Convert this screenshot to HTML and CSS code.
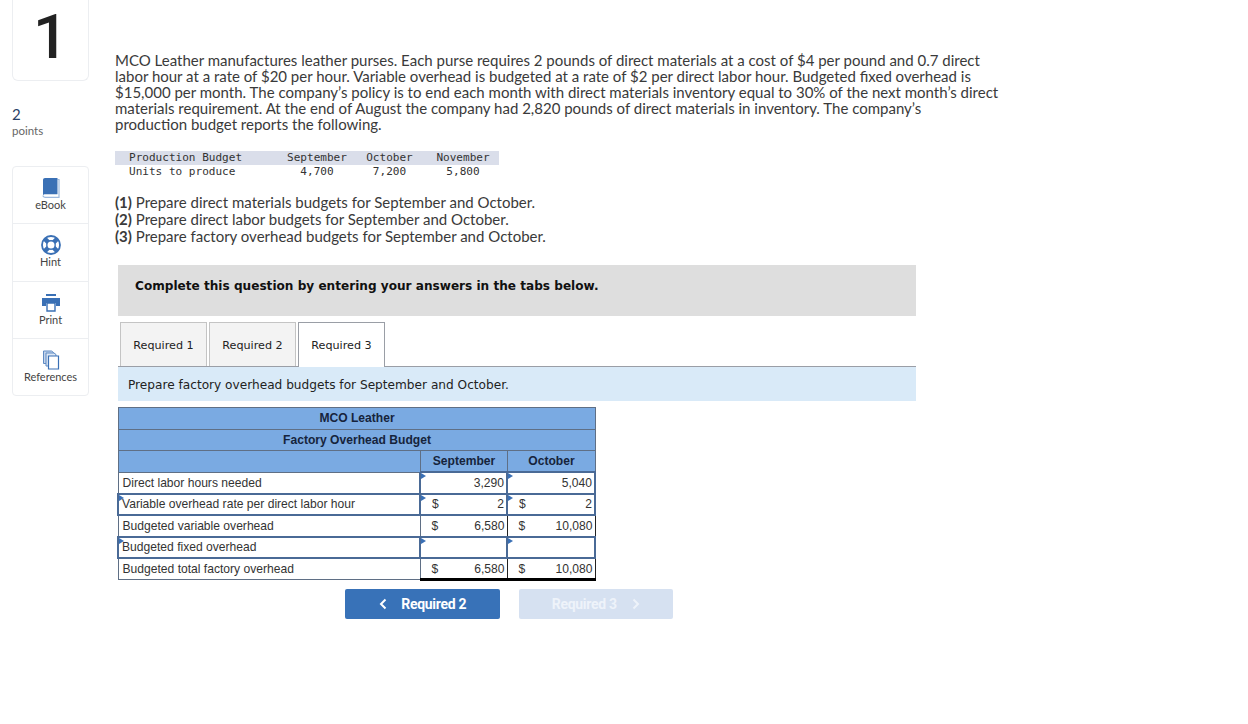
FILE: index.html
```html
<!DOCTYPE html>
<html lang="en">
<head>
<meta charset="utf-8">
<title>MCO Leather</title>
<link rel="stylesheet" href="styles.css">
</head>
<body>
<div class="page">
  <aside class="side">
    <div class="num-card">1</div>
    <div class="points"><div class="points-n">2</div><div class="points-l">points</div></div>
    <nav class="tools">
      <div class="tool"><svg width="18" height="20" viewBox="0 0 18 20"><path fill="none" stroke="#9db9de" stroke-width="1.200" d="M15.500 1.500H17V19.400H3.500C2 19.400 1 18.600 1 17.500"/><path fill="#3a70b5" d="M1 2C1 .8 1.800 0 3 0h12.500v16.200H3.500c-1.300 0-2.500.4-2.500 1.300z"/></svg><span>eBook</span></div>
      <div class="tool"><svg width="20" height="20" viewBox="0 0 20 20"><circle cx="10" cy="10" r="9" fill="#fff" stroke="#3a70b5" stroke-width="1.800"/><path stroke="#3a70b5" stroke-width="4.500" d="M3.600 3.600l12.800 12.800M16.400 3.600L3.600 16.400"/><circle cx="10" cy="10" r="4.200" fill="#fff" stroke="#3a70b5" stroke-width="1.400"/></svg><span>Hint</span></div>
      <div class="tool"><svg width="20" height="18" viewBox="0 0 20 18"><path fill="#3a70b5" d="M5 0h10v2H5zM1 4h18v8h-4V9H5v3H1z"/><path fill="#fff" stroke="#3a70b5" stroke-width="1.400" d="M6 9h8v8H6z"/></svg><span>Print</span></div>
      <div class="tool"><svg width="18" height="20" viewBox="0 0 18 20"><path fill="#c3d3ea" stroke="#5f8bc4" d="M1.500 1h8l2 1.500v11h-10z"/><path fill="#dde7f4" stroke="#5f8bc4" d="M4 3h8l2 1.500V16H4z"/><path fill="#fff" stroke="#3a70b5" stroke-width="1.200" d="M6.500 6H16.500v13H6.500z"/></svg><span>References</span></div>
    </nav>
  </aside>
  <main class="main">
    <p class="intro">MCO Leather manufactures leather purses. Each purse requires 2 pounds of direct materials at a cost of $4 per pound and 0.7 direct<br>labor hour at a rate of $20 per hour. Variable overhead is budgeted at a rate of $2 per direct labor hour. Budgeted fixed overhead is<br>$15,000 per month. The company’s policy is to end each month with direct materials inventory equal to 30% of the next month’s direct<br>materials requirement. At the end of August the company had 2,820 pounds of direct materials in inventory. The company’s<br>production budget reports the following.</p>
    <table class="prod">
      <tr class="prod-head"><td class="pc0">Production Budget</td><td class="pc1">September</td><td class="pc2">October</td><td class="pc3">November</td></tr>
      <tr><td class="pc0">Units to produce</td><td class="pc1">4,700</td><td class="pc2">7,200</td><td class="pc3">5,800</td></tr>
    </table>
    <ol class="reqs">
      <li><b>(1)</b> Prepare direct materials budgets for September and October.</li>
      <li><b>(2)</b> Prepare direct labor budgets for September and October.</li>
      <li><b>(3)</b> Prepare factory overhead budgets for September and October.</li>
    </ol>
    <div class="work">
      <div class="banner">Complete this question by entering your answers in the tabs below.</div>
      <div class="tabs">
        <div class="tab">Required 1</div>
        <div class="tab">Required 2</div>
        <div class="tab active">Required 3</div>
      </div>
      <div class="tab-desc">Prepare factory overhead budgets for September and October.</div>
      <table class="budget">
        <colgroup><col class="col-l"><col class="col-m"><col class="col-m2"></colgroup>
        <tr class="head"><th colspan="3">MCO Leather</th></tr>
        <tr class="head"><th colspan="3">Factory Overhead Budget</th></tr>
        <tr class="head"><th></th><th>September</th><th>October</th></tr>
        <tr><td class="lbl">Direct labor hours needed</td><td class="inp"><div class="val"><span></span><span>3,290</span></div></td><td class="inp"><div class="val"><span></span><span>5,040</span></div></td></tr>
        <tr><td class="lbl inp">Variable overhead rate per direct labor hour</td><td class="inp"><div class="val"><span class="cur">$</span><span>2</span></div></td><td class="inp"><div class="val"><span class="cur">$</span><span>2</span></div></td></tr>
        <tr><td class="lbl">Budgeted variable overhead</td><td class="calc"><div class="val"><span class="cur">$</span><span>6,580</span></div></td><td class="calc"><div class="val"><span class="cur">$</span><span>10,080</span></div></td></tr>
        <tr><td class="lbl inp">Budgeted fixed overhead</td><td class="inp"></td><td class="inp"></td></tr>
        <tr><td class="lbl">Budgeted total factory overhead</td><td class="calc total"><div class="val"><span class="cur">$</span><span>6,580</span></div></td><td class="calc total"><div class="val"><span class="cur">$</span><span>10,080</span></div></td></tr>
      </table>
      <div class="pager">
        <div class="btn prev"><svg width="8" height="12" viewBox="0 0 8 12"><path d="M6.500 1.500L2 6l4.500 4.500" fill="none" stroke="#fff" stroke-width="2"/></svg>Required 2</div>
        <div class="btn next">Required 3<svg width="8" height="12" viewBox="0 0 8 12"><path d="M1.500 1.500L6 6l-4.500 4.500" fill="none" stroke="#eef3fa" stroke-width="2"/></svg></div>
      </div>
    </div>
  </main>
</div>
</body>
</html>
```
FILE: styles.css
```css
* { box-sizing: border-box; }
html, body { margin: 0; padding: 0; background: #fff; overflow: hidden; }
body { width: 1248px; height: 724px; font-family: "Lato", "Liberation Sans", sans-serif; color: #333; }
.page { display: flex; align-items: flex-start; }

.side { width: 115px; padding-left: 12px; flex: none; }
.num-card { width: 77px; height: 81px; border: 1px solid #eceef1; border-top: 0; border-radius: 0 0 6px 6px; text-align: center; font-family: "Roboto", sans-serif; font-weight: 500; font-size: 62px; line-height: 73px; color: #222; }
.points { margin-top: 25px; height: 60px; }
.points-n { font-size: 15px; line-height: 17px; color: #2a3f66; }
.points-l { font-size: 11.500px; line-height: 15px; color: #666; }
.tools { width: 77px; height: 230px; border: 1px solid #eceef1; border-radius: 4px; display: flex; flex-direction: column; }
.tool { flex: 1; display: flex; flex-direction: column; align-items: center; padding-top: 11px; font-size: 11px; line-height: 13px; color: #444; border-bottom: 1px solid #eceef1; }
.tool:last-child { border-bottom: 0; }
.tool svg { display: block; height: 20px; }

.main { flex: 1; padding-top: 52px; }
.intro { margin: 0; font-size: 15px; line-height: 16px; color: #3a3a3a; white-space: nowrap; }
.prod { border-collapse: collapse; margin-top: 19px; font-family: "DejaVu Sans Mono", monospace; font-size: 11.050px; line-height: 14px; color: #333; }
.prod td { padding: 0; white-space: nowrap; height: 14px; }
.prod-head td { background: #dadeea; }
.pc0 { width: 172px; padding-left: 14px !important; }
.pc1 { width: 60px; text-align: center; }
.pc2 { width: 66px; text-align: center; padding-left: 19px !important; }
.pc3 { width: 86px; text-align: center; padding: 0 9px 0 23px !important; }
.reqs { list-style: none; margin: 15px 0 0; padding: 0; font-size: 15px; line-height: 17px; color: #3a3a3a; }

.work { margin-left: 3px; width: 798px; font-family: "DejaVu Sans", sans-serif; }
.banner { margin-top: 20px; height: 51px; background: #dedede; padding: 13px 17px 0; font-size: 12.100px; line-height: 17px; font-weight: 700; color: #111; }
.tabs { display: flex; gap: 2px; margin-top: 6px; padding-left: 2px; height: 45px; border-bottom: 1px solid #9a9ea6; }
.tab { width: 87px; height: 44px; border: 1px solid #c4c4c4; border-bottom: 0; background: #f3f3f3; font-size: 11.200px; line-height: 45px; text-align: center; color: #222; }
.tab.active { background: #fff; height: 45px; border-color: #9a9ea6; }
.tab-desc { height: 34px; background: #d9eaf8; padding-left: 10px; font-size: 12.150px; line-height: 36px; color: #222; }

.budget { border-collapse: collapse; table-layout: fixed; width: 477px; margin: 6px 0 0 -1px; font-family: "Liberation Sans", sans-serif; font-size: 12.100px; color: #333; }
.col-l { width: 302px; }
.col-m { width: 87px; }
.col-m2 { width: 88px; }
.budget tr { height: 21.500px; }
.budget th, .budget td { padding: 0; border: 1px solid #5f6f85; position: relative; }
.head th { background: #7aaae2; font-weight: 700; color: #16243c; text-align: center; padding-left: 1px; }
.budget td { background: #fff; }
.lbl { padding-left: 4px !important; }
.lbl.inp { padding-left: 3px !important; }
.budget td.inp { border: 2px solid #4a6a96; }
.budget td.inp::before { content: ""; position: absolute; left: 0; top: 0; border-left: 5px solid #3a70b5; border-top: 3px solid transparent; border-bottom: 3px solid transparent; }
.budget td.calc { border: 1px solid #222; }
.budget td.total { border-bottom: 3px solid #000; }
.val { display: flex; justify-content: space-between; padding: 0 2px 0 11px; }

.pager { display: flex; gap: 19px; margin-top: 8px; padding-left: 227px; }
.btn { width: 154.500px; height: 30px; border-radius: 2px; display: flex; align-items: center; justify-content: center; font-family: "Roboto", sans-serif; font-size: 14px; font-weight: 700; letter-spacing: -0.300px; color: #fff; padding-bottom: 1px; }
.prev { background: #3872b8; gap: 14px; padding-left: 1px; }
.next { background: #d6e1f1; gap: 15px; color: #eef3fa; }
```
